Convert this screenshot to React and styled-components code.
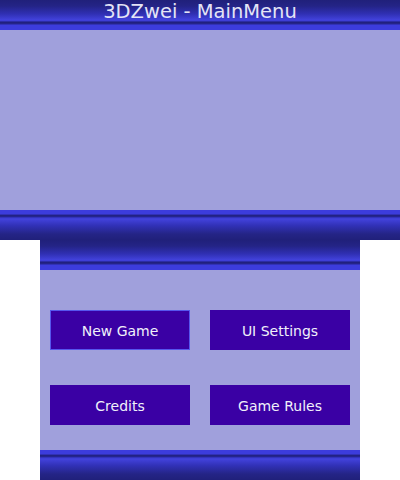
import React from 'react';
import styled, { createGlobalStyle, css } from 'styled-components';

const GlobalStyle = createGlobalStyle`
  html, body {
    margin: 0;
    padding: 0;
    background: #ffffff;
    font-family: "DejaVu Sans", "Liberation Sans", sans-serif;
  }
`;

const Page = styled.div`
  width: 400px;
  height: 480px;
  display: flex;
  flex-direction: column;
  align-items: center;
`;

const Screen = styled.div`
  width: ${(p) => p.width}px;
  height: 240px;
  display: flex;
  flex-direction: column;
  background: #a0a0dc;
`;

// bar whose bright rim faces down (top of a screen)
const barDown = css`
  background: linear-gradient(
    to bottom,
    #20207a 0px,
    #242486 6px,
    #3030b4 14px,
    #4242dc 20px,
    #3a3ad0 21px,
    #1e1e78 22px,
    #26268e 24px,
    #3c3cdc 25px,
    #3c3cdc 30px
  );
`;

// bar whose bright rim faces up (bottom of a screen)
const barUp = css`
  background: linear-gradient(
    to bottom,
    #3c3cdc 0px,
    #3c3cdc 4px,
    #26268e 5px,
    #1e1e78 6px,
    #3a3ad0 8px,
    #4242dc 9px,
    #3030b4 16px,
    #242486 24px,
    #20207a 30px
  );
`;

const Bar = styled.div`
  height: 30px;
  flex: none;
  display: flex;
  justify-content: center;
  ${(p) => (p.up ? barUp : barDown)}
`;

const Title = styled.div`
  color: #e4e4f6;
  font-size: 19.5px;
  line-height: 24px;
  height: 24px;
`;

const Content = styled.div`
  flex: 1;
`;

const Menu = styled.div`
  flex: 1;
  display: grid;
  grid-template-columns: 140px 140px;
  grid-auto-rows: 40px;
  column-gap: 20px;
  row-gap: 35px;
  padding: 40px 10px 0;
`;

const MenuButton = styled.button`
  box-sizing: border-box;
  margin: 0;
  padding: 2px 0 0;
  border: 1px solid ${(p) => (p.selected ? '#5656ee' : '#3a00a4')};
  background: #3a00a4;
  color: #f0f0fa;
  font-family: "DejaVu Sans", "Liberation Sans", sans-serif;
  font-size: 14px;
  cursor: pointer;
`;

const items = ['New Game', 'UI Settings', 'Credits', 'Game Rules'];

export default function App() {
  return (
    <Page>
      <GlobalStyle />
      <Screen width={400}>
        <Bar>
          <Title>3DZwei - MainMenu</Title>
        </Bar>
        <Content />
        <Bar up />
      </Screen>
      <Screen width={320}>
        <Bar />
        <Menu>
          {items.map((label, i) => (
            <MenuButton key={label} selected={i === 0}>
              {label}
            </MenuButton>
          ))}
        </Menu>
        <Bar up />
      </Screen>
    </Page>
  );
}
